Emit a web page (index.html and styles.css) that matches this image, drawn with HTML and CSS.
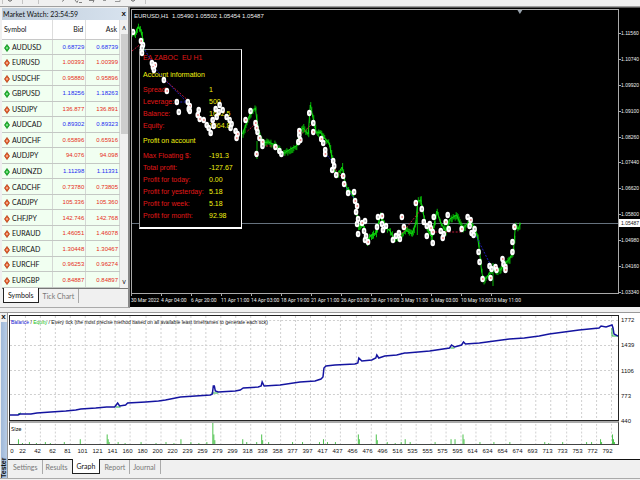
FILE: index.html
```html
<!DOCTYPE html>
<html lang="en">
<head>
<meta charset="utf-8">
<title>Strategy Tester</title>
<link rel="stylesheet" href="styles.css">
</head>
<body>
<header class="toolbar">
  <svg class="tool-icons" width="150" height="7" viewBox="0 0 150 7" aria-hidden="true">
    <path d="M2.500 0v4M22.500 0v4M38.500 0v4M145.500 0v4" stroke="#c4c4c4" fill="none"/>
    <path d="M8 0h4l-2 1.500zM62 1.500l2-1.500M75 0l2 2.500 1-2M79 2.500h3M89 .5h5l-1 2M131 0h4l-2 1.500z" stroke="#666" stroke-width=".8" fill="none"/>
    <path d="M103 .5h3M115 1.500h5v-1.500" stroke="#999" fill="none"/>
  </svg>
</header>
<div class="workspace">
  <section class="watch">
    <div class="watch-title"><span>Market Watch: 23:54:59</span><button class="close" aria-label="Close Market Watch">x</button></div>
    <div class="watch-body">
      <table class="quotes">
        <thead><tr><th>Symbol</th><th>Bid</th><th>Ask</th></tr></thead>
        <tbody id="quotes"></tbody>
      </table>
      <div class="scroll"><span>ʌ</span><i></i><span>v</span></div>
    </div>
    <nav class="tabs watch-tabs"><a class="on" href="#symbols">Symbols</a><a href="#tick">Tick Chart</a></nav>
  </section>
  <section class="chart">
    <div class="plot">
      <svg class="layer" viewBox="0 0 488 283" preserveAspectRatio="none"><path d="M0 213.500H488" stroke="#66727e"/><path d="M387 0h5l-2.500 4z" fill="#9aa4ae"/></svg>
      <div class="quote-line">EURUSD,H1&nbsp; 1.05490 1.05502 1.05454 1.05487</div>
      <div class="ea">
        <h2 class="red">EA ZABOC&nbsp; EU H1</h2>
        <h2>Account information</h2>
        <dl>
          <dt>Spread:</dt><dd>1</dd><dt>Leverage:</dt><dd>500</dd><dt>Balance:</dt><dd>1692.5</dd><dt>Equity:</dt><dd>1564.8</dd>
        </dl>
        <h2 class="second">Profit on account</h2>
        <dl>
          <dt>Max Floating $:</dt><dd>-191.3</dd><dt>Total profit:</dt><dd>-127.67</dd><dt>Profit for today:</dt><dd>0.00</dd><dt>Profit for yesterday:</dt><dd>5.18</dd><dt>Profit for week:</dt><dd>5.18</dd><dt>Profit for month:</dt><dd>92.98</dd>
        </dl>
      </div>
      <svg class="layer" id="trades" viewBox="131 9 488 283" preserveAspectRatio="none"></svg>
    </div>
    <div class="prices" id="prices"></div>
    <div class="times" id="times"></div>
  </section>
</div>
<section class="tester">
  <aside class="rail"><button class="close" aria-label="Close Tester">x</button><div class="rail-name">Tester</div></aside>
  <div class="tester-main">
    <div class="graph">
      <div class="balance">
        <svg class="layer" id="balance" viewBox="9 316 610 104" preserveAspectRatio="none"></svg>
        <div class="legend"><span class="blue">Balance</span> / <span class="green">Equity</span> / Every tick (the most precise method based on all available least timeframes to generate each tick)</div>
      </div>
      <div class="levels"><span>1772</span><span>1439</span><span>1106</span><span>773</span><span>440</span></div>
      <div class="size"><svg class="layer" id="size" viewBox="9 423 610 22" preserveAspectRatio="none"></svg><span class="legend">Size</span></div>
      <div class="steps" id="steps"></div>
    </div>
    <nav class="tabs tester-tabs"><a href="#settings">Settings</a><a href="#results">Results</a><a class="on" href="#graph">Graph</a><a href="#report">Report</a><a href="#journal">Journal</a></nav>
  </div>
</section>
<script src="charts.js"></script>
</body>
</html>
```
FILE: styles.css
```css
* { box-sizing: border-box; }
body { margin: 0; min-height: 100vh; background: #f0f0f0; color: #111; font: 7px/10px Lato, "Liberation Sans", sans-serif; overflow: hidden; }
h2, dl, dd { margin: 0; font-size: inherit; font-weight: normal; }
button { border: 0; padding: 0; background: none; font: bold 8px/8px "Liberation Sans", sans-serif; color: #111; }
a { color: #777; text-decoration: none; }
svg { display: block; }
.toolbar { height: 7px; border-bottom: 1px solid #a0a0a0; }
.workspace { display: grid; grid-template-columns: 130px 1fr; }
.watch { display: flex; flex-direction: column; border-right: 2px solid #888; padding: 1px 0 4px 2px; border-bottom: 1px solid #aaa; }
.watch-title { display: flex; justify-content: space-between; padding: 0 1px; line-height: 12px; background: linear-gradient(90deg, #bfcddb, #d7e2ee); margin-right: 1px; }
.watch-body { display: flex; border-bottom: 1px solid #777; }
.quotes { flex: 1; border-collapse: collapse; table-layout: fixed; background: #f1fff1; height: 268px; }
.quotes th { height: 19px; padding: 0 2px; background: #fff; font-weight: normal; text-align: right; border-bottom: 1px solid #c8c8c8; border-right: 1px solid #ddd; }
.quotes th:first-child { width: 50px; text-align: left; }
.quotes td { padding: 0 1px; text-align: right; border-bottom: 1px solid #c4c8c4; border-right: 1px solid #d4d8d4; font-family: "Liberation Sans", sans-serif; font-size: 6px; color: #e62c20; }
.quotes .up td { color: #1c2cf0; }
.quotes td:first-child, .quotes .up td:first-child { text-align: left; font-family: inherit; font-size: 7px; color: #111; }
.quotes svg { display: inline-block; vertical-align: -2px; margin: 0 2px 0 1px; }
.scroll { width: 8px; display: flex; flex-direction: column; align-items: center; background: #f0f0f0; }
.scroll i { width: 7px; height: 100px; background: #cdcdcd; margin-bottom: auto; }
.scroll span { line-height: 14px; }
.tabs { display: flex; align-items: flex-start; padding-left: 1px; }
.tabs a { padding: 0 4px; line-height: 14px; box-shadow: 1px 0 #aaa; }
.tabs .on { background: #fff; color: #111; border: 1px solid #222; border-top: 0; margin-top: -1px; box-shadow: none; }
.chart { background: #000; color: #eee; display: grid; grid-template-columns: 1fr 21px; grid-template-rows: 285px 1fr; padding: 1px 0 0 1px; font: 5px/8px "Liberation Sans", sans-serif; border-top: 1px solid #555; border-bottom: 1px solid #f0f0f0; min-width: 0; }
.plot { position: relative; border: 1px solid #aaa; min-width: 0; }
.layer { position: absolute; inset: 0; width: 100%; height: 100%; }
.quote-line { position: absolute; left: 2px; top: 2px; font-size: 6px; }
.ea { position: absolute; left: 7px; top: 39px; width: 103px; padding: 2px 3px 5px; background: #000; border: 1px solid #999; border-right-color: #fff; border-bottom: 2px solid #fff; color: #f2f210; font-size: 7px; line-height: 12px; white-space: nowrap; }
.ea h2 { margin-bottom: 3px; }
.ea h2:first-child { margin-bottom: 5px; }
.ea .second { margin-top: 3px; }
.ea .red, .ea dt { color: #e01818; }
.ea dl { display: grid; grid-template-columns: 66px 1fr; }
.prices { display: flex; flex-direction: column; justify-content: space-between; padding-top: 20px; margin-bottom: -2px; position: relative; }
.prices span { padding-left: 2px; background: linear-gradient(#aaa, #aaa) 0 4px / 2px 1px no-repeat; }
.prices b { position: absolute; left: 0; right: 0; top: 210px; padding-left: 2px; font-weight: normal; background: #fff; color: #111; }
.times { grid-column: 1 / 3; display: grid; grid-template-columns: repeat(16, 30px); white-space: nowrap; font-family: Roboto, sans-serif; }
.times span { padding-top: 2px; background: linear-gradient(#aaa, #aaa) 0 0 / 1px 2px no-repeat; }
.tester { display: flex; margin-top: 4px; border-top: 1px solid #999; border-bottom: 1px solid #aaa; }
.rail { width: 7px; display: flex; flex-direction: column; align-items: center; }
.rail-name { flex: 1; width: 6px; margin-top: 1px; background: linear-gradient(90deg, #b7cce6, #9fb8d8); writing-mode: vertical-rl; transform: rotate(180deg); font: bold 7px/6px "Liberation Sans", sans-serif; }
.tester-main { flex: 1; min-width: 0; border-left: 1px solid #999; padding-bottom: 4px; }
.graph { display: grid; grid-template-columns: 1fr 21px; grid-template-rows: 106px 24px 14px; background: #fff; padding: 2px 0 0 1px; border-bottom: 1px solid #111; font: 6px/10px "Liberation Sans", sans-serif; }
.balance { position: relative; border: 1px solid #222; }
.legend { position: relative; display: block; padding: 1px; font-family: Lato, sans-serif; white-space: nowrap; }
.balance .legend { font: 5px/10px "Liberation Sans", sans-serif; }
.blue { color: #1010d0; }
.green { color: #20c020; }
.levels { display: flex; flex-direction: column; justify-content: space-between; margin-bottom: -5px; }
.levels span { padding-left: 2px; }
.size { position: relative; border: 1px solid #444; border-top: 2px solid #aaa; }
.steps { grid-column: 1 / 3; display: grid; grid-template-columns: 6px repeat(40, 15px); text-align: center; line-height: 12px; }
.tester-tabs a { padding: 0 4px; }
```
FILE: charts.js
```javascript
const quotes = `AUDUSD 0.68729 0.68739 up
EURUSD 1.00393 1.00399
USDCHF 0.95880 0.95896
GBPUSD 1.18256 1.18263 up
USDJPY 136.877 136.891
AUDCAD 0.89302 0.89323 up
AUDCHF 0.65896 0.65916
AUDJPY 94.076 94.098
AUDNZD 1.11298 1.11331 up
CADCHF 0.73780 0.73805
CADJPY 105.336 105.360
CHFJPY 142.746 142.768
EURAUD 1.46051 1.46078
EURCAD 1.30448 1.30467
EURCHF 0.96253 0.96274
EURGBP 0.84887 0.84897`.split("\n").map(r => r.split(" "));
const el = id => document.getElementById(id);
el("quotes").innerHTML = quotes.map(([s, b, a, up]) => {
  const c = up ? "#20c030" : "#e8602c", k = up ? "#0a7a18" : "#a83210";
  return `<tr class="${up || "down"}"><td><svg width="6" height="8" viewBox="0 0 6 8"><path d="M3 .5L5.500 4 3 7.500.5 4z" fill="${c}" stroke="${k}" stroke-width=".7"/><path d="M2.200 4h1.600" stroke="#fff"/></svg>${s}</td><td>${b}</td><td>${a}</td></tr>`;
}).join("");
const spans = list => list.map(t => `<span>${t}</span>`).join("");
el("prices").innerHTML = spans("1.11560 1.10740 1.09920 1.09100 1.08260 1.07440 1.06620 1.05800 1.04980 1.04160 1.03340".split(" ")) + "<b>1.05487</b>";
el("times").innerHTML = spans("30 Mar 2022,4 Apr 04:00,6 Apr 20:00,11 Apr 11:00,14 Apr 03:00,18 Apr 19:00,21 Apr 11:00,26 Apr 03:00,28 Apr 19:00,3 May 11:00,6 May 03:00,10 May 19:00,13 May 11:00".split(","));
el("steps").innerHTML = spans("0 22 42 62 81 101 121 141 160 180 200 220 239 259 279 299 318 338 358 377 397 417 437 456 476 496 516 535 555 575 595 614 634 654 674 693 713 733 753 772 792".split(" "));

const points = s => s.trim().split(/\s+/).map(p => p.split(",").map(Number));
let seed = 7;
const rnd = () => (seed = (seed * 16807) % 2147483647) / 2147483647;

const runs = ["131,31 134,33 137,26 139,28 140,31 142,38 143,50",
 "242,133 246,122 250,112 255,107 257,125 258,130 262,142 268,141 275,144 280,150 284,152 290,148 296,145 300,130 303,127 305,130 308,133 310,104 313,118 316,132 320,131 324,137 329,142 332,158 336,175 342,166 346,186 352,192 356,205 358,225 363,223 367,240 370,235 376,232 380,215 385,225 390,230 394,238 400,235 406,229 412,233 416,222 418,200 421,199 423,210 426,225 432,236 437,210 441,222 446,230 450,218 457,214 463,228 470,220 475,228 478,236 480,250 482,270 484,280 488,275 493,267 496,270 501,269 506,262 510,258 514,250 516,225 519,228 521,222"];
let out = "", bars = "";
for (const run of runs) {
  const p = points(run);
  for (let i = 1; i < p.length; i++) {
    const [x0, y0] = p[i - 1], [x1, y1] = p[i];
    for (let x = x0; x < x1; x++) {
      const y = y0 + (y1 - y0) * (x - x0) / (x1 - x0);
      bars += `M${x + .5} ${(y - rnd() * 4).toFixed(1)}V${(y + 1 + rnd() * 4).toFixed(1)}`;
    }
  }
  out += `<polyline points="${run}" fill="none" stroke="#10d810" stroke-width="1"/>`;
}
out = `<path d="${bars}M493.500 262V285M256.500 140V158M417.500 205V234" stroke="#08e008" stroke-width=".8" fill="none"/>` + out;
out += `<g fill="none" stroke-dasharray="2 1.500"><path d="M131 50L141 42M163 78L188 100M256 122L247 130M262 145H275M313 122L301 133M400 235L424 205M435 231H462M343 178L335 168" stroke="#c01838"/><path d="M142 46L152 62M153 66L165 80L188 103M176 101H188M325 152L334 163M475 232L492 266M344 184L356 200" stroke="#2020c0"/></g>`;
const trades = points("132,31 140,40 142,44 141,47 141,52 151,62 154,64 152,66 153,69 163,79 166,90 176,101 178,111 187,101 189,105 188,108 189,110 198,109 197,114 199,118 203,119 206,124 208,127 210,132 213,125 212,119 216,116 218,111 219,104 222,109 215,108 226,116 229,119 231,123 230,127 235,130 237,133 236,137 245,119 250,110 255,122 256,127 257,131 256,153 259,137 262,141 262,145 275,146 279,150 281,153 299,130 299,134 298,141 309,112 313,122 313,131 300,139 321,138 323,142 325,149 325,153 333,160 334,165 332,169 336,174 343,175 344,183 348,192 354,191 355,200 357,205 356,211 358,218 357,223 358,233 362,222 365,220 364,230 366,235 365,239 368,241 378,216 382,215 377,226 382,223 386,225 383,229 393,239 396,235 399,232 400,238 402,216 404,226 416,202 422,208 424,221 427,225 430,223 431,227 427,235 434,216 433,231 433,242 441,230 444,233 443,237 446,221 448,214 449,228 462,228 468,216 471,219 470,225 472,232 475,228 474,234 479,251 480,261 483,278 490,265 492,268 491,277 496,266 497,269 503,258 504,263 506,266 506,269 513,251 513,241 515,226");
for (const [x, y] of trades) {
  out += `<ellipse cx="${x}" cy="${y}" rx="2.300" ry="3.200" fill="#fff"/>`;
  out += `<path d="M${x - .5} ${y}h1.500" stroke="${["#e02020", "#999", "#777"][Math.floor(rnd() * 3)]}"/>`;
}
el("trades").innerHTML = out;

let grid = "";
for (let k = 0; k < 40; k++) grid += `M${Math.round(24 + 15.07 * k) + .5} 316V445`;
const dashed = h => `<path d="${grid}${h}" stroke="#cfcfcf" stroke-dasharray="2 2" fill="none"/>`;
const curve = "9,415 17,415 19,414 30,414 36,413 50,412 65,411 75,410 80,409 95,408 106,407 114,407 117,403 119,406 125,405 127,403 145,402 158,401 165,400 180,397 195,396 210,395 212,394 213,386 214,386 215,391 218,392 235,391 240,390 243,388 258,387 261,386 262,382 264,386 280,385 300,382 315,381 321,379 323,377 324,368 326,366 335,365 355,364 358,363 359,358 362,361 372,360 376,358 377,355 379,358 385,356 397,355 405,353 407,353 430,351 450,348 452,345 455,347 462,345 464,342 466,344 480,343 495,341 510,339 525,338 540,336 550,334 565,332 580,330 590,329 600,328 602,326 607,327 613,325 614,328 615,334 619,336";
el("balance").innerHTML = dashed("M9 320.500H619M9 345.500H619M9 370.500H619M9 394.500H619") +
 `<path d="M17 414l3-1M115 407h5M211 393h7M451 348h4M613 328v8h6" stroke="#20b040" fill="none"/><polyline points="${curve}" fill="none" stroke="#1414a0" stroke-width="1.500"/>`;
const lots = points("17,5 21,1 28,2 35,1 44,2 49,1 63,2 79,5 106,10 107,5 108,2 117,2 124,1 140,2 155,1 165,2 173,1 180,5 190,2 198,1 206,2 212,22 213,10 214,4 242,5 246,2 256,2 261,10 262,4 268,2 292,2 302,2 319,2 323,5 327,2 335,2 358,10 359,5 376,10 377,4 387,2 395,1 401,2 405,5 410,2 435,2 451,5 455,5 463,10 464,5 480,2 494,2 510,2 545,2 549,1 563,2 587,2 592,2 601,5 602,2 613,10 614,5 615,2");
el("size").innerHTML = dashed("") + `<path d="${lots.map(([x, h]) => `M${x + .5} 445v-${h}`).join("")}" stroke="#48c048"/>`;
```
